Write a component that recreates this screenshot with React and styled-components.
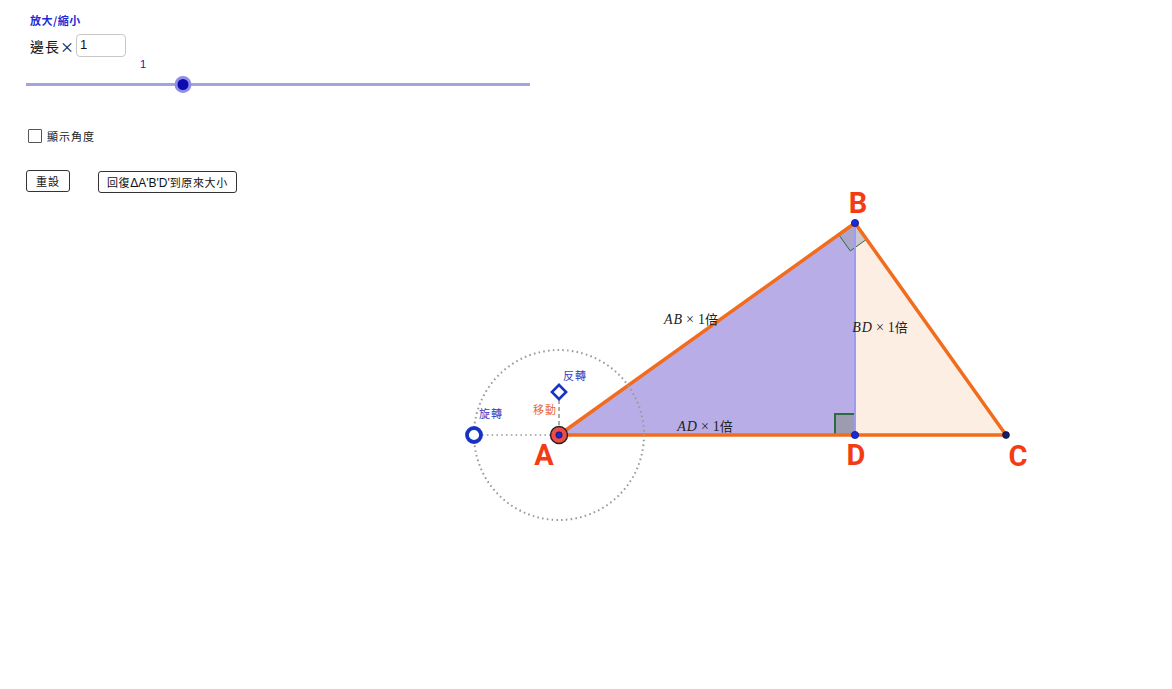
import React from "react";
import styled, { createGlobalStyle } from "styled-components";

const GlobalStyle = createGlobalStyle`
  html, body {
    margin: 0;
    padding: 0;
    background: #ffffff;
  }
  body {
    font-family: "Noto Sans CJK TC", "Noto Sans", sans-serif;
  }
`;

const Applet = styled.div`
  display: grid;
  width: 1172px;
  height: 689px;
  overflow: hidden;
  background: #ffffff;
`;

const Layer = styled.div`
  grid-area: 1 / 1;
  display: flex;
  flex-direction: column;
  align-items: flex-start;
  z-index: 1;
`;

const Canvas = styled.svg`
  grid-area: 1 / 1;
  width: 1172px;
  height: 689px;
  display: block;
`;

const Title = styled.div`
  margin: 13px 0 0 30px;
  font-size: 11px;
  line-height: 14px;
  font-weight: bold;
  color: #1f2bd6;
  letter-spacing: 0.5px;
`;

const InputRow = styled.div`
  display: flex;
  align-items: center;
  gap: 1px;
  margin: 7px 0 0 30px;
  height: 23px;
`;

const InputLabel = styled.span`
  font-size: 14px;
  color: #111;
  letter-spacing: 1px;
`;

const Field = styled.div`
  width: 50px;
  height: 23px;
  border: 1px solid #c8c8c8;
  border-radius: 4px;
  box-sizing: border-box;
  padding-left: 3px;
  font-family: "Liberation Sans", sans-serif;
  font-size: 13px;
  line-height: 19px;
  color: #111;
`;

const SliderValue = styled.div`
  margin: 0 0 0 140px;
  font-family: "Liberation Sans", sans-serif;
  font-size: 11px;
  line-height: 14px;
  color: #1a1aa8;
`;

const SliderTrack = styled.div`
  position: relative;
  margin: 12px 0 0 26px;
  width: 504px;
  height: 3px;
  background: #a3a3e0;
`;

const SliderKnob = styled.div`
  position: absolute;
  left: ${(p) => p.$at}px;
  top: -7px;
  width: 11px;
  height: 11px;
  border-radius: 50%;
  background: #0b0bb0;
  border: 3px solid #8e8ee6;
  transform: translateX(-50%);
`;

const CheckRow = styled.label`
  display: flex;
  align-items: center;
  gap: 5px;
  margin: 42px 0 0 28px;
  font-size: 11px;
  color: #222;
  letter-spacing: 1px;
`;

const Box = styled.span`
  width: 12px;
  height: 12px;
  border: 1px solid #555;
  border-radius: 1px;
  background: #fff;
`;

const ButtonRow = styled.div`
  display: flex;
  align-items: flex-start;
  gap: 28px;
  margin: 26px 0 0 26px;
`;

const Button = styled.div`
  height: 22px;
  padding: 0 ${(p) => p.$pad}px;
  border: 1px solid #333;
  border-radius: 3px;
  box-sizing: border-box;
  font-size: 11px;
  line-height: 20px;
  color: #111;
  letter-spacing: ${(p) => p.$spacing || 1}px;
  white-space: nowrap;
  margin-top: ${(p) => p.$dy || 0}px;
  background: #fff;
`;

const Greek = styled.span`
  font-family: "Liberation Sans", sans-serif;
  font-size: 12px;
  letter-spacing: 0;
`;

const A = [559, 435];
const B = [855, 223];
const D = [855, 435];
const C = [1006, 435];
const ORANGE = "#f26c1e";
const BLUE = "#1733c4";

const pt = (p) => p.join(",");

function MathLabel({ x, y, a, b }) {
  return (
    <text x={x} y={y} fontSize="14" fill="#222" textAnchor="middle">
      <tspan fontFamily="Liberation Serif" fontStyle="italic">{a}</tspan>
      <tspan fontFamily="Liberation Serif" fontStyle="italic" dx="1">{b}</tspan>
      <tspan fontFamily="Liberation Serif" dx="4">×</tspan>
      <tspan fontFamily="Liberation Serif" dx="4">1</tspan>
      <tspan fontFamily="Noto Sans CJK TC" fontSize="13">倍</tspan>
    </text>
  );
}

function Vertex({ x, y, name }) {
  return (
    <text
      x={x}
      y={y}
      fontFamily="Roboto, 'Liberation Sans', sans-serif"
      fontWeight="bold"
      fontSize="29"
      fill="#f43c12"
      textAnchor="middle"
    >
      {name}
    </text>
  );
}

function Handle({ x, y, text, color }) {
  return (
    <text x={x} y={y} fontFamily="Noto Sans CJK TC" fontSize="11" fill={color} letterSpacing="1">
      {text}
    </text>
  );
}

function Figure() {
  return (
    <Canvas viewBox="0 0 1172 689">
      <polygon points={`${pt(A)} ${pt(B)} ${pt(D)}`} fill="#b8ade6" />
      <polygon points={`${pt(B)} ${pt(D)} ${pt(C)}`} fill="#fdeee4" />

      {/* right angle at B */}
      <polygon points="855,223 838.7,234.6 850.3,250.9 866.6,239.3" fill="#a0a0b4" fillOpacity="0.5" />
      <polyline points="838.7,234.6 850.3,250.9 866.6,239.3" fill="none" stroke="#2e6b3e" strokeWidth="1" />
      {/* right angle at D */}
      <rect x="835" y="414" width="20" height="21" fill="#9c9cb0" />
      <polyline points="835,435 835,414 855,414" fill="none" stroke="#2e6b3e" strokeWidth="2" />

      <line x1={B[0]} y1={B[1]} x2={D[0]} y2={D[1]} stroke="#9c9cf0" strokeWidth="2" />

      <line x1={A[0]} y1={A[1]} x2={B[0]} y2={B[1]} stroke={ORANGE} strokeWidth="3.5" strokeLinecap="round" />
      <line x1={B[0]} y1={B[1]} x2={C[0]} y2={C[1]} stroke={ORANGE} strokeWidth="3.5" strokeLinecap="round" />
      <line x1={A[0]} y1={A[1]} x2={C[0]} y2={C[1]} stroke={ORANGE} strokeWidth="3.5" strokeLinecap="round" />

      <circle cx={A[0]} cy={A[1]} r="85" fill="none" stroke="#9a9a9a" strokeWidth="2" strokeDasharray="1.6 3.2" />
      <line x1="482" y1="435" x2="550" y2="435" stroke="#9a9a9a" strokeWidth="1.6" strokeDasharray="1.6 3.2" />
      <line x1="559" y1="400" x2="559" y2="426" stroke="#8a8a8a" strokeWidth="1.4" strokeDasharray="4 3" />

      <rect x="554" y="387" width="10" height="10" fill="#fff" stroke={BLUE} strokeWidth="2.6" transform="rotate(45 559 392)" />
      <circle cx="474" cy="435" r="7" fill="#fff" stroke={BLUE} strokeWidth="3.8" />

      <circle cx={A[0]} cy={A[1]} r="8.5" fill="#f04a4a" stroke="#222" strokeWidth="1.4" />
      <circle cx={A[0]} cy={A[1]} r="3.2" fill="#1a2ad0" stroke="#111" strokeWidth="0.6" />
      <circle cx={B[0]} cy={B[1]} r="3.6" fill="#1a2ad6" stroke="#0a1490" strokeWidth="0.8" />
      <circle cx={D[0]} cy={D[1]} r="3.6" fill="#1a2ad6" stroke="#0a1490" strokeWidth="0.8" />
      <circle cx={C[0]} cy={C[1]} r="3.4" fill="#14206a" stroke="#0a0f40" strokeWidth="0.8" />

      <Vertex x={544} y={465} name="A" />
      <Vertex x={858} y={213} name="B" />
      <Vertex x={856} y={465} name="D" />
      <Vertex x={1018} y={466} name="C" />

      <Handle x={479} y={418} text="旋轉" color="#3443c2" />
      <Handle x={563} y={380} text="反轉" color="#3443c2" />
      <Handle x={533} y={414} text="移動" color="#ec6a34" />

      <MathLabel x={691} y={324} a="A" b="B" />
      <MathLabel x={880} y={332} a="B" b="D" />
      <MathLabel x={705} y={431} a="A" b="D" />
    </Canvas>
  );
}

export default function App() {
  return (
    <>
      <GlobalStyle />
      <Applet>
        <Figure />
        <Layer>
          <Title>放大/縮小</Title>
          <InputRow>
            <InputLabel>邊長×</InputLabel>
            <Field>1</Field>
          </InputRow>
          <SliderValue>1</SliderValue>
          <SliderTrack>
            <SliderKnob $at={157} />
          </SliderTrack>
          <CheckRow>
            <Box />
            顯示角度
          </CheckRow>
          <ButtonRow>
            <Button $pad={9}>重設</Button>
            <Button $pad={8} $dy={1} $spacing={0.6}>
              回復<Greek>ΔA'B'D'</Greek>到原來大小
            </Button>
          </ButtonRow>
        </Layer>
      </Applet>
    </>
  );
}
